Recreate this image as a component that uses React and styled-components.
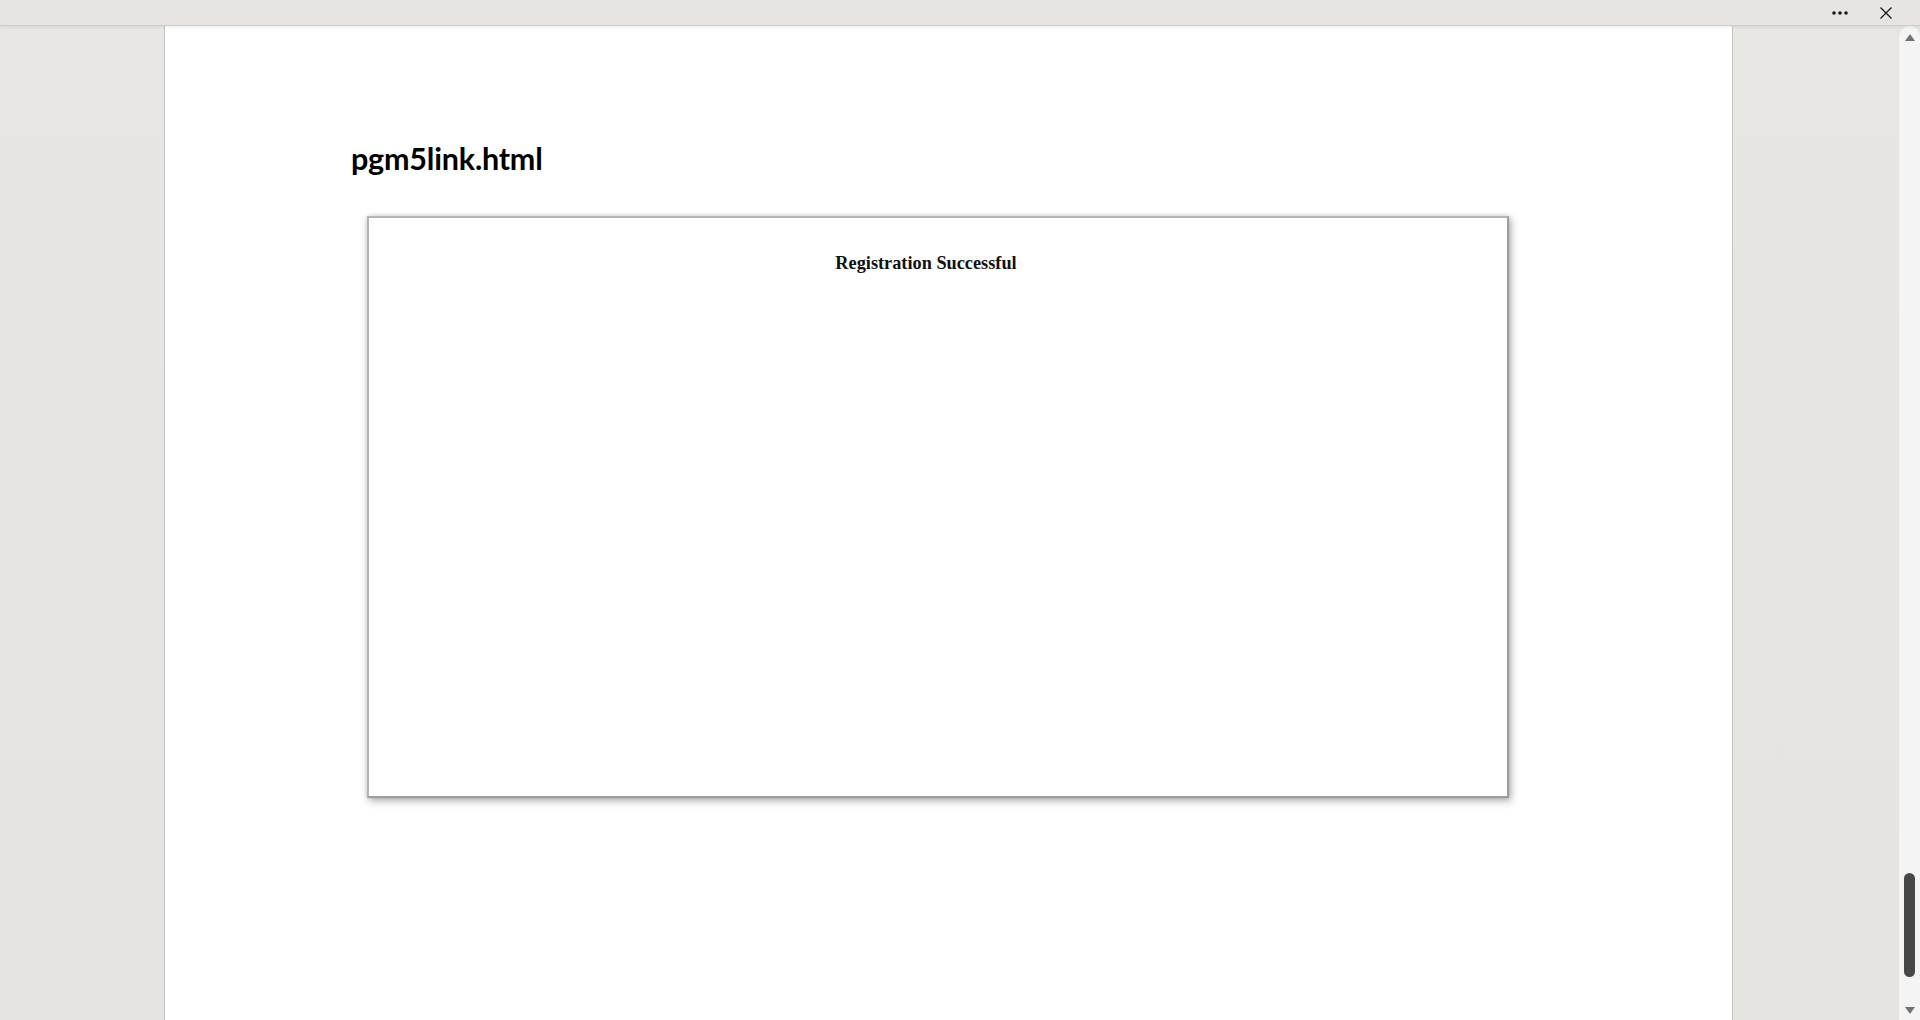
import styled, { createGlobalStyle } from "styled-components";

const Global = createGlobalStyle`
    html, body {
        margin: 0;
        padding: 0;
        height: 100%;
        overflow: hidden;
    }
    #root {
        height: 100%;
    }
`

const Shell = styled.div`
    width: 1920px;
    height: 1020px;
    display: flex;
    flex-direction: column;
    background: #e6e5e2;
`

const TopBar = styled.div`
    height: 25px;
    flex: none;
    display: flex;
    align-items: center;
    justify-content: flex-end;
    gap: 26px;
    padding-right: 24px;
    background: #e7e5e1;
    border-bottom: 1px solid #cfcdca;
    box-shadow: 0 1px 3px rgba(0, 0, 0, 0.08);
    position: relative;
    z-index: 2;
`

const BarButton = styled.button`
    border: 0;
    background: none;
    padding: 0;
    display: flex;
    align-items: center;
    justify-content: center;
    width: 20px;
    height: 20px;
`

const Body = styled.div`
    flex: 1;
    display: flex;
    min-height: 0;
`

const Gutter = styled.div`
    width: ${p => p.w ? p.w + "px" : "auto"};
    flex: ${p => p.w ? "none" : 1};
    background: linear-gradient(180deg, #e7e6e3 0%, #e5e4e1 100%);
`

const Page = styled.div`
    width: 1569px;
    flex: none;
    box-sizing: border-box;
    background: #fff;
    border-left: 1px solid #c4c4c4;
    border-right: 1px solid #c4c4c4;
    padding-left: 186px;
`

const Title = styled.h1`
    margin: 114px 0 0 0;
    font-family: Lato, "Open Sans", sans-serif;
    font-weight: 700;
    font-size: 30.5px;
    line-height: 36px;
    color: #000;
    letter-spacing: -0.2px;
`

const Frame = styled.div`
    margin: 40px 0 0 16px;
    width: 1138px;
    height: 578px;
    border: 2px solid #b5b5b5;
    border-right-color: #9c9c9c;
    border-bottom-color: #9c9c9c;
    box-shadow: 2px 3px 8px rgba(0, 0, 0, 0.3), 0 0 4px rgba(0, 0, 0, 0.14);
    background: #fff;
`

const Message = styled.div`
    margin: 35px 24px 0 0;
    text-align: center;
    font-family: "Liberation Serif", "Times New Roman", serif;
    font-weight: 700;
    font-size: 18.3px;
    color: #111;
`

const Track = styled.div`
    width: 21px;
    flex: none;
    background: #f4f4f4;
    border-radius: 10px 10px 0 0;
    display: flex;
    flex-direction: column;
    align-items: center;
    padding: 8px 0 6px;
    box-sizing: border-box;
`

const Arrow = styled.div`
    width: 0;
    height: 0;
    border-left: 5px solid transparent;
    border-right: 5px solid transparent;
    ${p => p.down
        ? "border-top: 7px solid #737373;"
        : "border-bottom: 7px solid #737373;"}
`

const Spacer = styled.div`
    flex: 1;
`

const Thumb = styled.div`
    width: 11px;
    height: 104px;
    border-radius: 6px;
    background: #474747;
    margin-bottom: 30px;
`

function Dots() {
    return (
        <svg width="18" height="6" viewBox="0 0 18 6">
            <circle cx="3" cy="3" r="1.8" fill="#1a1a1a" />
            <circle cx="9" cy="3" r="1.8" fill="#1a1a1a" />
            <circle cx="15" cy="3" r="1.8" fill="#1a1a1a" />
        </svg>
    )
}

function Close() {
    return (
        <svg width="14" height="14" viewBox="0 0 14 14">
            <path d="M1.5 1.5 L12.5 12.5 M12.5 1.5 L1.5 12.5" stroke="#1a1a1a" strokeWidth="1.3" fill="none" />
        </svg>
    )
}

export default function App() {
    return (
        <>
            <Global />
            <Shell>
                <TopBar>
                    <BarButton><Dots /></BarButton>
                    <BarButton><Close /></BarButton>
                </TopBar>
                <Body>
                    <Gutter w={164} />
                    <Page>
                        <Title>pgm5link.html</Title>
                        <Frame>
                            <Message>Registration Successful</Message>
                        </Frame>
                    </Page>
                    <Gutter />
                    <Track>
                        <Arrow />
                        <Spacer />
                        <Thumb />
                        <Arrow down />
                    </Track>
                </Body>
            </Shell>
        </>
    )
}
